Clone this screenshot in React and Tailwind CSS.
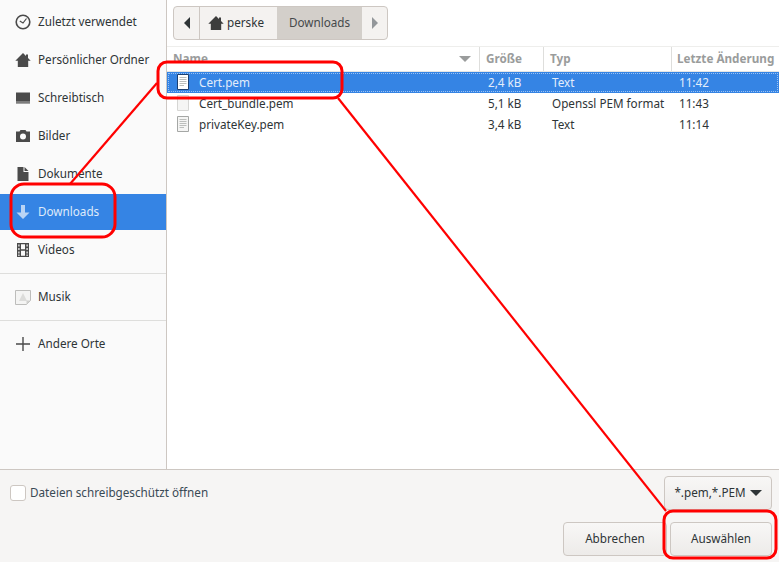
import React from 'react';

const HomeIcon = ({ className }) => (
  <svg viewBox="0 0 16 16" className={className} fill="currentColor">
    <path d="M8 1 0.300 8.700H2.800V15H13.200V8.700H15.700L13 6V2.500H11V4Z" />
  </svg>
);

const ClockIcon = ({ className }) => (
  <svg viewBox="0 0 16 16" className={className} fill="none" stroke="currentColor">
    <circle cx="8" cy="8" r="6.800" strokeWidth="1.600" />
    <path d="M4.800 7 8 9 11.500 4.500" strokeWidth="1.200" />
  </svg>
);

const DesktopIcon = ({ className }) => (
  <svg viewBox="0 0 16 16" className={className} fill="currentColor">
    <path d="M1 2.500H15V13.500H1Z" />
    <path d="M1 11.700H15V12.300H1Z" fill="#f6f5f4" />
  </svg>
);

const CameraIcon = ({ className }) => (
  <svg viewBox="0 0 16 16" className={className} fill="currentColor">
    <path fillRule="evenodd" d="M5.500 2H10.500L11.500 3.500H15V14H1V3.500H4.500ZM8 5.500A3 3 0 1 0 8 11.500 3 3 0 0 0 8 5.500Z" />
  </svg>
);

const DocIcon = ({ className }) => (
  <svg viewBox="0 0 16 16" className={className} fill="currentColor">
    <path d="M2.500 1H8.500V6H13.500V15H2.500Z" />
    <path d="M9.500 1 13.500 5H9.500Z" />
  </svg>
);

const DownloadIcon = ({ className }) => (
  <svg viewBox="0 0 16 16" className={className} fill="currentColor">
    <path d="M6 1H10V8.500H14.500L8 15 1.500 8.500H6Z" />
  </svg>
);

const FilmIcon = ({ className }) => (
  <svg viewBox="0 0 16 16" className={className} fill="currentColor">
    <path
      fillRule="evenodd"
      d="M2 1H14V15H2ZM3.300 2.500V4.500H4.500V2.500ZM3.300 6V8H4.500V6ZM3.300 9.500V11.500H4.500V9.500ZM3.300 12.500V14H4.500V12.500ZM11.500 2.500V4.500H12.700V2.500ZM11.500 6V8H12.700V6ZM11.500 9.500V11.500H12.700V9.500ZM11.500 12.500V14H12.700V12.500ZM6 2.300V7.300H10V2.300ZM6 8.700V13.700H10V8.700Z"
    />
  </svg>
);

const MusicIcon = ({ className }) => (
  <svg viewBox="0 0 16 16" className={className}>
    <path d="M0.500 1.500H15.500V11.500L11.500 15.500H0.500Z" fill="#f4f4f3" stroke="#bdbdbb" />
    <path d="M8 4 12 12H4Z" fill="#dcdcda" />
    <path d="M15.500 11.500H11.500V15.500Z" fill="#d0d0ce" />
  </svg>
);

const PlusIcon = ({ className }) => (
  <svg viewBox="0 0 16 16" className={className} fill="currentColor">
    <path d="M7.300 1H8.700V7.300H15V8.700H8.700V15H7.300V8.700H1V7.300H7.300Z" />
  </svg>
);

const FileIcon = ({ lines = true, selected = false }) => (
  <svg viewBox="0 0 12 16" className="h-4 w-3">
    <path
      d="M0.500 0.500H11.500V15.500H0.500Z"
      fill={selected ? '#ffffff' : '#f5f5f4'}
      stroke={selected ? '#1c3f70' : lines ? '#a5a7a5' : '#d6d6d4'}
    />
    {lines && (
      <path d="M2.500 3.500H9.500M2.500 5.500H9.500M2.500 7.500H9.500M2.500 9.500H9.500M2.500 11.500H7" stroke="#bcbebc" strokeWidth="1" />
    )}
  </svg>
);

const places = [
  { label: 'Zuletzt verwendet', icon: ClockIcon },
  { label: 'Persönlicher Ordner', icon: HomeIcon },
  { label: 'Schreibtisch', icon: DesktopIcon },
  { label: 'Bilder', icon: CameraIcon },
  { label: 'Dokumente', icon: DocIcon },
  { label: 'Downloads', icon: DownloadIcon, active: true },
  { label: 'Videos', icon: FilmIcon },
];

const files = [
  { name: 'Cert.pem', size: '2,4 kB', type: 'Text', time: '11:42', selected: true },
  { name: 'Cert_bundle.pem', size: '5,1 kB', type: 'Openssl PEM format', time: '11:43', plain: true },
  { name: 'privateKey.pem', size: '3,4 kB', type: 'Text', time: '11:14' },
];

function SidebarRow({ label, icon: Icon, active }) {
  return (
    <div className={`flex items-center pl-[15px] ${active ? 'my-px h-[36px] bg-[#3584e4] text-[#dfeafa]' : 'h-[38px] text-[#2e3436]'}`}>
      <Icon className={`h-4 w-4 shrink-0 ${active ? 'text-[#b9d4f5]' : 'text-[#4a4a4a]'}`} />
      <span className="ml-[7px] whitespace-nowrap">{label}</span>
    </div>
  );
}

function Sidebar() {
  return (
    <div className="w-[167px] shrink-0 border-r border-[#cdc7c2] bg-[#fafafa] pt-[3px]">
      {places.map((p) => (
        <SidebarRow key={p.label} {...p} />
      ))}
      <div className="mt-[4px] mb-[4px] h-px bg-[#dededc]" />
      <SidebarRow label="Musik" icon={MusicIcon} />
      <div className="mt-[4px] mb-[4px] h-px bg-[#dededc]" />
      <SidebarRow label="Andere Orte" icon={PlusIcon} />
    </div>
  );
}

function PathBar() {
  return (
    <div className="mt-[6px] ml-[6px] flex h-[34px] w-[215px] overflow-hidden rounded-[4px] border border-[#cdc7c2] bg-[#f4f2f0] text-[#2e3436]">
      <div className="flex w-[26px] items-center justify-center border-r border-[#cdc7c2]">
        <div className="h-0 w-0 border-y-[6px] border-r-[6px] border-y-transparent border-r-[#2e3436]" />
      </div>
      <div className="flex w-[77px] items-center pl-[8px]">
        <HomeIcon className="h-4 w-4 text-[#3d3d3d]" />
        <span className="ml-[3px]">perske</span>
      </div>
      <div className="flex w-[85px] items-center justify-center bg-[#d3cfca] text-[#45494a]">Downloads</div>
      <div className="flex flex-1 items-center justify-center">
        <div className="h-0 w-0 border-y-[6px] border-l-[6px] border-y-transparent border-l-[#93979a]" />
      </div>
    </div>
  );
}

function FileTable() {
  return (
    <div className="mt-[6px] flex-1 border-t border-[#eeeeec] bg-white">
      <div className="flex h-[25px] items-center border-b border-[#e6e6e4] font-bold text-[#9a9c9c]">
        <div className="flex h-full w-[313px] items-center justify-between border-r border-[#dededc] pr-[8px] pl-[6px]">
          <span>Name</span>
          <div className="h-0 w-0 border-x-[6px] border-t-[6px] border-x-transparent border-t-[#9a9c9c]" />
        </div>
        <div className="flex h-full w-[64px] items-center border-r border-[#dededc] pl-[6px]">Größe</div>
        <div className="flex h-full w-[128px] items-center border-r border-[#dededc] pl-[6px]">Typ</div>
        <div className="pl-[5px] whitespace-nowrap">Letzte Änderung</div>
      </div>
      {files.map((f) => (
        <div
          key={f.name}
          className={`flex h-[21px] items-center ${f.selected ? 'bg-[#3584e4] text-[#e3edfb] outline-1 -outline-offset-2 outline-dotted outline-[#9cc2f2]' : 'text-[#2e3436]'}`}
        >
          <div className="flex w-[313px] items-center pl-[10px]">
            <FileIcon lines={!f.plain} selected={f.selected} />
            <span className="ml-[10px]">{f.name}</span>
          </div>
          <div className="w-[64px] pl-[8px]">{f.size}</div>
          <div className="w-[128px] pl-[8px] whitespace-nowrap">{f.type}</div>
          <div className="pl-[7px]">{f.time}</div>
        </div>
      ))}
    </div>
  );
}

function BottomBar() {
  const btn = 'flex items-center justify-center rounded-[4px] border border-[#cdc7c2] bg-gradient-to-b from-[#f8f7f6] to-[#edebe9] text-[#2e3436]';
  return (
    <div className="h-[93px] shrink-0 border-t border-[#cdc7c2] bg-[#f6f5f4] pt-[6px] pr-[7px] pl-[10px]">
      <div className="flex items-start justify-between">
        <div className="mt-[8px] flex items-center">
          <div className="h-4 w-4 rounded-[3px] border border-[#cdc7c2] bg-white" />
          <span className="ml-[4px] text-[#3a4a55]">Dateien schreibgeschützt öffnen</span>
        </div>
        <div className={`${btn} h-[34px] w-[108px] gap-[4px]`}>
          <span>*.pem,*.PEM</span>
          <div className="h-0 w-0 border-x-[6px] border-t-[6px] border-x-transparent border-t-[#2e3436]" />
        </div>
      </div>
      <div className="mt-[12px] flex justify-end gap-[3px]">
        <div className={`${btn} h-[34px] w-[104px]`}>Abbrechen</div>
        <div className={`${btn} h-[34px] w-[102px]`}>Auswählen</div>
      </div>
    </div>
  );
}

// red hand-drawn marks that sit on top of the screenshot
function Annotations() {
  return (
    <svg className="pointer-events-none absolute inset-0" width="779" height="562" fill="none" stroke="#ff0000">
      <g strokeWidth="3">
        <rect x="158" y="62" width="184" height="36" rx="9" />
        <rect x="11" y="184" width="104" height="53" rx="13" />
        <rect x="664" y="511" width="112" height="47" rx="9" />
      </g>
      <g strokeWidth="2.200">
        <path d="M157 83 70 184" />
        <path d="M338 98 666 511" />
      </g>
    </svg>
  );
}

export default function App() {
  return (
    <div className="relative flex h-[562px] w-[779px] flex-col overflow-hidden bg-white font-['Noto_Sans',sans-serif] text-[11.7px]">
      <div className="flex min-h-0 flex-1">
        <Sidebar />
        <div className="flex min-w-0 flex-1 flex-col">
          <PathBar />
          <FileTable />
        </div>
      </div>
      <BottomBar />
      <Annotations />
    </div>
  );
}
